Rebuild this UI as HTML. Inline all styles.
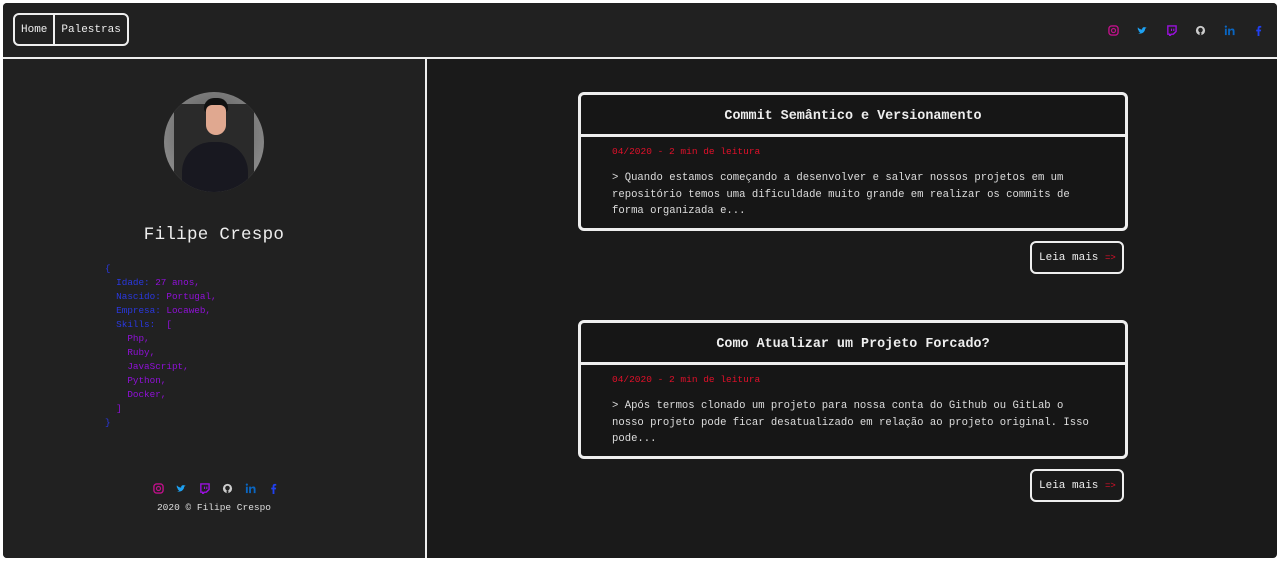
<!DOCTYPE html>
<html><head><meta charset="utf-8"><style>
*{margin:0;padding:0;box-sizing:border-box}
body{width:1280px;height:561px;background:#fff;font-family:"Liberation Mono",monospace;overflow:hidden;position:relative}
.frame{position:absolute;left:3px;top:3px;width:1274px;height:555px;background:#1a1a1a;border-radius:4px;overflow:hidden}
.hdr{position:absolute;left:0;top:0;width:1274px;height:56px;background:#212121;border-bottom:2px solid #eee}
.nav{position:absolute;left:10px;top:10px;height:33px;border:2px solid #eee;border-radius:6px;display:flex;color:#eee;font-size:11px}
.nav span{padding:0 6px;line-height:31px}
.nav span:first-child{border-right:2px solid #eee}
.icons{position:absolute;display:flex;align-items:center}
.icons svg{width:11px;height:11px}
.left{position:absolute;left:0;top:56px;width:424px;height:499px;background:#212121;border-right:2px solid #eee}
.av{position:absolute;left:161px;top:33px;width:100px;height:100px;border-radius:50%;background:radial-gradient(circle at 50% 40%,#555,#888 70%);overflow:hidden}
.name{position:absolute;left:0;width:422px;top:166px;text-align:center;color:#eee;font-size:17.5px;letter-spacing:0.3px}
.code{position:absolute;left:102px;top:203px;font-size:9.3px;line-height:14px;white-space:pre;color:#2a38e0}
.p{color:#9010d8}
.copy{position:absolute;left:0;width:422px;top:443px;text-align:center;color:#ddd;font-size:9.5px}
.card{position:absolute;left:575px;width:550px;height:139px;border:3px solid #eee;border-radius:6px;background:#161616}
.card h2{height:42px;border-bottom:3px solid #eee;text-align:center;color:#eee;font-size:13.4px;font-weight:bold;line-height:43px}
.meta{color:#e0102a;font-size:9.5px;margin:9px 0 0 31px}
.txt{color:#ddd;font-size:10.6px;line-height:16.5px;margin:13px 32px 0 31px}
.btn{position:absolute;left:1027px;width:94px;height:33px;border:2px solid #eee;border-radius:6px;color:#eee;font-size:11px;line-height:30px;padding-left:7px}
.btn b{color:#e0102a;font-weight:normal;font-size:9px}
</style></head><body>
<div class="frame">
<div class="hdr">
<div class="nav"><span>Home</span><span>Palestras</span></div>
<div class="icons" style="left:1105px;top:22px;gap:18px">
<svg viewBox="0 0 12 12"><rect x="1" y="1" width="10" height="10" rx="3" fill="none" stroke="#c0108a" stroke-width="1.5"/><circle cx="6" cy="6" r="2.2" fill="none" stroke="#c0108a" stroke-width="1.3"/></svg>
<svg viewBox="0 0 12 12"><path d="M1 9c3 1 6 0 7.5-3l.5-2 1.5-1-1.3.2L10.5 2l-1.5.6A2.3 2.3 0 0 0 5.6 5C3.5 5 2 4 1 2.5c-.5 1.5 0 3 1.200 3.5L1.5 6C1.8 7 2.8 7.8 3.6 8 2.7 8.7 1.8 9 1 9z" fill="#1da1f2"/></svg>
<svg viewBox="0 0 12 12"><path d="M2 1h9v6l-3 3H6l-2 2V10H2z" fill="none" stroke="#9b10e0" stroke-width="1.5"/><path d="M6 4v2.5M8.5 4v2.5" stroke="#9b10e0" stroke-width="1.2"/></svg>
<svg viewBox="0 0 12 12"><circle cx="6" cy="6" r="5" fill="#ccc"/><circle cx="6" cy="5.5" r="2.5" fill="#212121"/><rect x="5" y="8" width="2" height="3" fill="#212121"/></svg>
<svg viewBox="0 0 12 12"><rect x="1" y="4" width="2" height="7" fill="#0a66c2"/><circle cx="2" cy="1.8" r="1.2" fill="#0a66c2"/><path d="M4.5 4h2v1.2c.6-1 1.5-1.4 2.6-1.4 1.6 0 2.4 1 2.4 3V11h-2V7.2c0-1-.4-1.6-1.2-1.6S6.5 6.2 6.5 7.2V11h-2z" fill="#0a66c2"/></svg>
<svg viewBox="0 0 12 12"><path d="M7 12V7h1.6l.3-2H7V3.8c0-.6.2-1 1-1h1V1.1C8.6 1 8.1 1 7.6 1 6 1 5 2 5 3.6V5H3.5v2H5v5z" fill="#2040f0"/></svg>
</div>
</div>
<div class="left">
<div class="av">
<div style="position:absolute;left:10px;top:12px;width:80px;height:95px;background:#2a2a2a"></div>
<div style="position:absolute;left:40px;top:6px;width:24px;height:14px;background:#111;border-radius:10px 10px 3px 3px"></div>
<div style="position:absolute;left:42px;top:13px;width:20px;height:30px;background:#e0a890;border-radius:6px 6px 10px 10px"></div>
<div style="position:absolute;left:18px;top:50px;width:66px;height:60px;background:#181820;border-radius:30px 30px 0 0"></div>
</div>
<div class="name">Filipe Crespo</div>
<div class="code">{
  Idade: <span class="p">27 anos,</span>
  Nascido: <span class="p">Portugal,</span>
  Empresa: <span class="p">Locaweb,</span>
  Skills:  <span class="p">[
    Php,
    Ruby,
    JavaScript,
    Python,
    Docker,
  ]</span>
}</div>
<div class="icons" style="left:150px;top:424px;gap:12px">
<svg viewBox="0 0 12 12"><rect x="1" y="1" width="10" height="10" rx="3" fill="none" stroke="#c0108a" stroke-width="1.5"/><circle cx="6" cy="6" r="2.2" fill="none" stroke="#c0108a" stroke-width="1.3"/></svg>
<svg viewBox="0 0 12 12"><path d="M1 9c3 1 6 0 7.5-3l.5-2 1.5-1-1.3.2L10.5 2l-1.5.6A2.3 2.3 0 0 0 5.6 5C3.5 5 2 4 1 2.5c-.5 1.5 0 3 1.2 3.5L1.5 6C1.8 7 2.8 7.8 3.6 8 2.7 8.7 1.8 9 1 9z" fill="#1da1f2"/></svg>
<svg viewBox="0 0 12 12"><path d="M2 1h9v6l-3 3H6l-2 2V10H2z" fill="none" stroke="#9b10e0" stroke-width="1.5"/><path d="M6 4v2.5M8.5 4v2.5" stroke="#9b10e0" stroke-width="1.2"/></svg>
<svg viewBox="0 0 12 12"><circle cx="6" cy="6" r="5" fill="#ccc"/><circle cx="6" cy="5.5" r="2.5" fill="#212121"/><rect x="5" y="8" width="2" height="3" fill="#212121"/></svg>
<svg viewBox="0 0 12 12"><rect x="1" y="4" width="2" height="7" fill="#0a66c2"/><circle cx="2" cy="1.8" r="1.2" fill="#0a66c2"/><path d="M4.5 4h2v1.2c.6-1 1.5-1.4 2.6-1.4 1.6 0 2.4 1 2.4 3V11h-2V7.2c0-1-.4-1.6-1.2-1.6S6.5 6.2 6.5 7.2V11h-2z" fill="#0a66c2"/></svg>
<svg viewBox="0 0 12 12"><path d="M7 12V7h1.6l.3-2H7V3.8c0-.6.2-1 1-1h1V1.1C8.6 1 8.1 1 7.6 1 6 1 5 2 5 3.6V5H3.5v2H5v5z" fill="#2040f0"/></svg>
</div>
<div class="copy">2020 © Filipe Crespo</div>
</div>
<div class="card" style="top:89px"><h2>Commit Semântico e Versionamento</h2><div class="meta">04/2020 - 2 min de leitura</div><div class="txt">&gt; Quando estamos começando a desenvolver e salvar nossos projetos em um repositório temos uma dificuldade muito grande em realizar os commits de forma organizada e...</div></div>
<div class="btn" style="top:238px">Leia mais <b>=&gt;</b></div>
<div class="card" style="top:317px"><h2>Como Atualizar um Projeto Forcado?</h2><div class="meta">04/2020 - 2 min de leitura</div><div class="txt">&gt; Após termos clonado um projeto para nossa conta do Github ou GitLab o nosso projeto pode ficar desatualizado em relação ao projeto original. Isso pode...</div></div>
<div class="btn" style="top:466px">Leia mais <b>=&gt;</b></div>
</div>
</body></html>
